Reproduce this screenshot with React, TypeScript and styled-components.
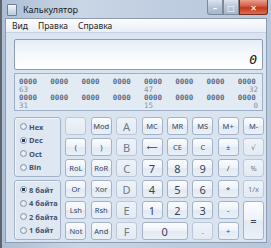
import styled, { createGlobalStyle, css } from 'styled-components';

const GlobalStyle = createGlobalStyle`
    html, body {
        margin: 0;
        padding: 0;
        background: #6e6a66;
    }
    #root {
        width: 271px;
        height: 248px;
    }
`;

const Window = styled.div`
    width: 271px;
    height: 248px;
    box-sizing: border-box;
    display: flex;
    flex-direction: column;
    background: linear-gradient(90deg, #aebfd4 0%, #c9d6e6 30%, #bfcde0 60%, #b7c8dc 100%);
    border-left: 2px solid #5f6670;
    font-family: 'Noto Sans', 'DejaVu Sans', sans-serif;
`;

const TitleBar = styled.div`
    height: 18px;
    display: flex;
    align-items: flex-start;
    padding-left: 5px;
`;

const AppIcon = styled.div`
    width: 8px;
    height: 10px;
    margin-top: 4px;
    background: linear-gradient(180deg, #f4f7fb, #b9c9dc);
    border: 1px solid #6d7f96;
    border-radius: 1px;
`;

const Title = styled.div`
    margin: 3px 0 0 6px;
    font-size: 9px;
    color: #1b1b1b;
`;

const Caption = styled.div`
    margin-left: auto;
    margin-right: 3px;
    display: flex;
`;

const CaptionButton = styled.div<{ $close?: boolean }>`
    width: 16px;
    height: 15px;
    display: flex;
    align-items: center;
    justify-content: center;
    box-sizing: border-box;
    border: 1px solid #7d8a9b;
    border-top: none;
    background: linear-gradient(180deg, #dbe4ef 0%, #b6c5d8 50%, #a6b8cf 100%);
    color: #fff;
    font-size: 8px;
    font-weight: bold;
    ${({ $close }) =>
        $close &&
        css`
            width: 29px;
            border-color: #7a2a1e;
            background: linear-gradient(180deg, #e9a08f 0%, #d25a3f 45%, #c0391f 55%, #d8704e 100%);
            border-radius: 0 0 3px 0;
        `}
    &:first-child {
        border-radius: 0 0 0 3px;
    }
`;

const Client = styled.div`
    flex: 1;
    margin: 0 4px 5px 3px;
    display: flex;
    flex-direction: column;
    background: #dae4f0;
    border: 1px solid #8d9bb0;
`;

const MenuBar = styled.div`
    height: 13px;
    display: flex;
    align-items: center;
    gap: 10px;
    padding-left: 6px;
    background: linear-gradient(180deg, #fbfcfe, #e9eef6);
    border-bottom: 1px solid #c7d2e0;
    font-size: 8.5px;
    color: #1e1e1e;
`;

const Body = styled.div`
    padding: 6px 3px 0 8px;
    display: flex;
    flex-direction: column;
`;

const Display = styled.div`
    height: 31px;
    box-sizing: border-box;
    border: 1px solid #8c9db3;
    border-radius: 2px;
    background: linear-gradient(180deg, #e6edf6 0%, #f6f9fc 50%, #ffffff 100%);
    display: flex;
    align-items: flex-end;
    justify-content: flex-end;
    padding: 0 5px 2px 0;
    font-family: 'DejaVu Sans Mono', monospace;
    font-style: italic;
    font-size: 13px;
    color: #111;
`;

const BitPanel = styled.div`
    margin-top: 3px;
    height: 38px;
    box-sizing: border-box;
    border: 1px solid #9fb0c6;
    background: #e2eaf4;
    padding: 4px 4px 0 4px;
    display: grid;
    grid-template-columns: repeat(8, 1fr);
    column-gap: 11px;
    font-family: 'DejaVu Sans Mono', monospace;
    font-size: 7.5px;
    line-height: 8px;
`;

const Nibble = styled.span`
    color: #5a6a84;
    font-weight: bold;
`;

const BitIndex = styled.span<{ $right?: boolean }>`
    color: #8a95a3;
    text-align: ${({ $right }) => ($right ? 'right' : 'left')};
`;

const Keypad = styled.div`
    margin-top: 6px;
    display: grid;
    grid-template-columns: 47px repeat(8, 1fr);
    grid-template-rows: repeat(6, 18px);
    column-gap: 4.4px;
    row-gap: 3px;
    width: 250px;
`;

const Group = styled.div<{ $row: number }>`
    grid-column: 1;
    grid-row: ${({ $row }) => `${$row} / span 3`};
    border: 1px solid #a3b2c6;
    border-radius: 3px;
    background: #dfe7f2;
    box-shadow: inset 1px 1px 0 #f3f7fb;
    display: flex;
    flex-direction: column;
    justify-content: space-around;
    padding: 2px 0 2px 5px;
`;

const Radio = styled.div<{ $checked?: boolean }>`
    display: flex;
    align-items: center;
    gap: 2px;
    font-size: 7.5px;
    font-weight: bold;
    color: #44536a;
    white-space: nowrap;

    &::before {
        content: '';
        width: 7px;
        height: 7px;
        box-sizing: border-box;
        border-radius: 50%;
        border: 1px solid #8595aa;
        background: ${({ $checked }) =>
            $checked
                ? 'radial-gradient(circle, #2c3f5c 0 1.6px, #eef3f9 2px)'
                : 'radial-gradient(circle, #f7f9fc, #cfd9e6)'};
    }
`;

const Key = styled.div<{ $big?: boolean; $off?: boolean; $span?: 'row' | 'col' }>`
    display: flex;
    align-items: center;
    justify-content: center;
    box-sizing: border-box;
    border: 1px solid #a3b2c6;
    border-radius: 3px;
    background: linear-gradient(180deg, #fbfcfe 0%, #eef3f9 48%, #e3eaf3 52%, #eaf0f7 100%);
    font-size: ${({ $big }) => ($big ? '11px' : '7.5px')};
    color: #34445c;
    white-space: nowrap;
    ${({ $off }) =>
        $off &&
        css`
            border-color: #bcc8d7;
            background: linear-gradient(180deg, #eef3f9, #e3eaf3);
            color: #6f7a8a;
        `}
    ${({ $span }) => $span === 'row' && 'grid-row: span 2;'}
    ${({ $span }) => $span === 'col' && 'grid-column: span 2;'}
`;

type KeyDef = { label: string; big?: boolean; off?: boolean; span?: 'row' | 'col' };

const rows: KeyDef[][] = [
    [{ label: '', off: true }, { label: 'Mod' }, { label: 'A', big: true, off: true }, { label: 'MC' }, { label: 'MR' }, { label: 'MS' }, { label: 'M+' }, { label: 'M-' }],
    [{ label: '(' }, { label: ')' }, { label: 'B', big: true, off: true }, { label: '⟵' }, { label: 'CE' }, { label: 'C' }, { label: '±' }, { label: '√', off: true }],
    [{ label: 'RoL' }, { label: 'RoR' }, { label: 'C', big: true, off: true }, { label: '7', big: true }, { label: '8', big: true }, { label: '9', big: true }, { label: '/' }, { label: '%', off: true }],
    [{ label: 'Or' }, { label: 'Xor' }, { label: 'D', big: true, off: true }, { label: '4', big: true }, { label: '5', big: true }, { label: '6', big: true }, { label: '*' }, { label: '1/x', off: true }],
    [{ label: 'Lsh' }, { label: 'Rsh' }, { label: 'E', big: true, off: true }, { label: '1', big: true }, { label: '2', big: true }, { label: '3', big: true }, { label: '-' }, { label: '=', big: true, span: 'row' }],
    [{ label: 'Not' }, { label: 'And' }, { label: 'F', big: true, off: true }, { label: '0', big: true, span: 'col' }, { label: '.', off: true }, { label: '+' }],
];

const bitRows = [
    ['63', '', '', '', '47', '', '', '32'],
    ['31', '', '', '', '15', '', '', '0'],
];

export default function App() {
    return (
        <>
            <GlobalStyle />
            <Window>
                <TitleBar>
                    <AppIcon />
                    <Title>Калькулятор</Title>
                    <Caption>
                        <CaptionButton>–</CaptionButton>
                        <CaptionButton>□</CaptionButton>
                        <CaptionButton $close>✕</CaptionButton>
                    </Caption>
                </TitleBar>
                <Client>
                    <MenuBar>
                        <span>Вид</span>
                        <span>Правка</span>
                        <span>Справка</span>
                    </MenuBar>
                    <Body>
                        <Display>0</Display>
                        <BitPanel>
                            {bitRows.map((labels, r) => [
                                ...labels.map((_, i) => <Nibble key={`n${r}-${i}`}>0000</Nibble>),
                                ...labels.map((l, i) => (
                                    <BitIndex key={`l${r}-${i}`} $right={i === 7}>
                                        {l}
                                    </BitIndex>
                                )),
                            ])}
                        </BitPanel>
                        <Keypad>
                            <Group $row={1}>
                                <Radio>Hex</Radio>
                                <Radio $checked>Dec</Radio>
                                <Radio>Oct</Radio>
                                <Radio>Bin</Radio>
                            </Group>
                            <Group $row={4}>
                                <Radio $checked>8 байт</Radio>
                                <Radio>4 байта</Radio>
                                <Radio>2 байта</Radio>
                                <Radio>1 байт</Radio>
                            </Group>
                            {rows.flat().map((k, i) => (
                                <Key key={i} $big={k.big} $off={k.off} $span={k.span}>
                                    {k.label}
                                </Key>
                            ))}
                        </Keypad>
                    </Body>
                </Client>
            </Window>
        </>
    );
}
